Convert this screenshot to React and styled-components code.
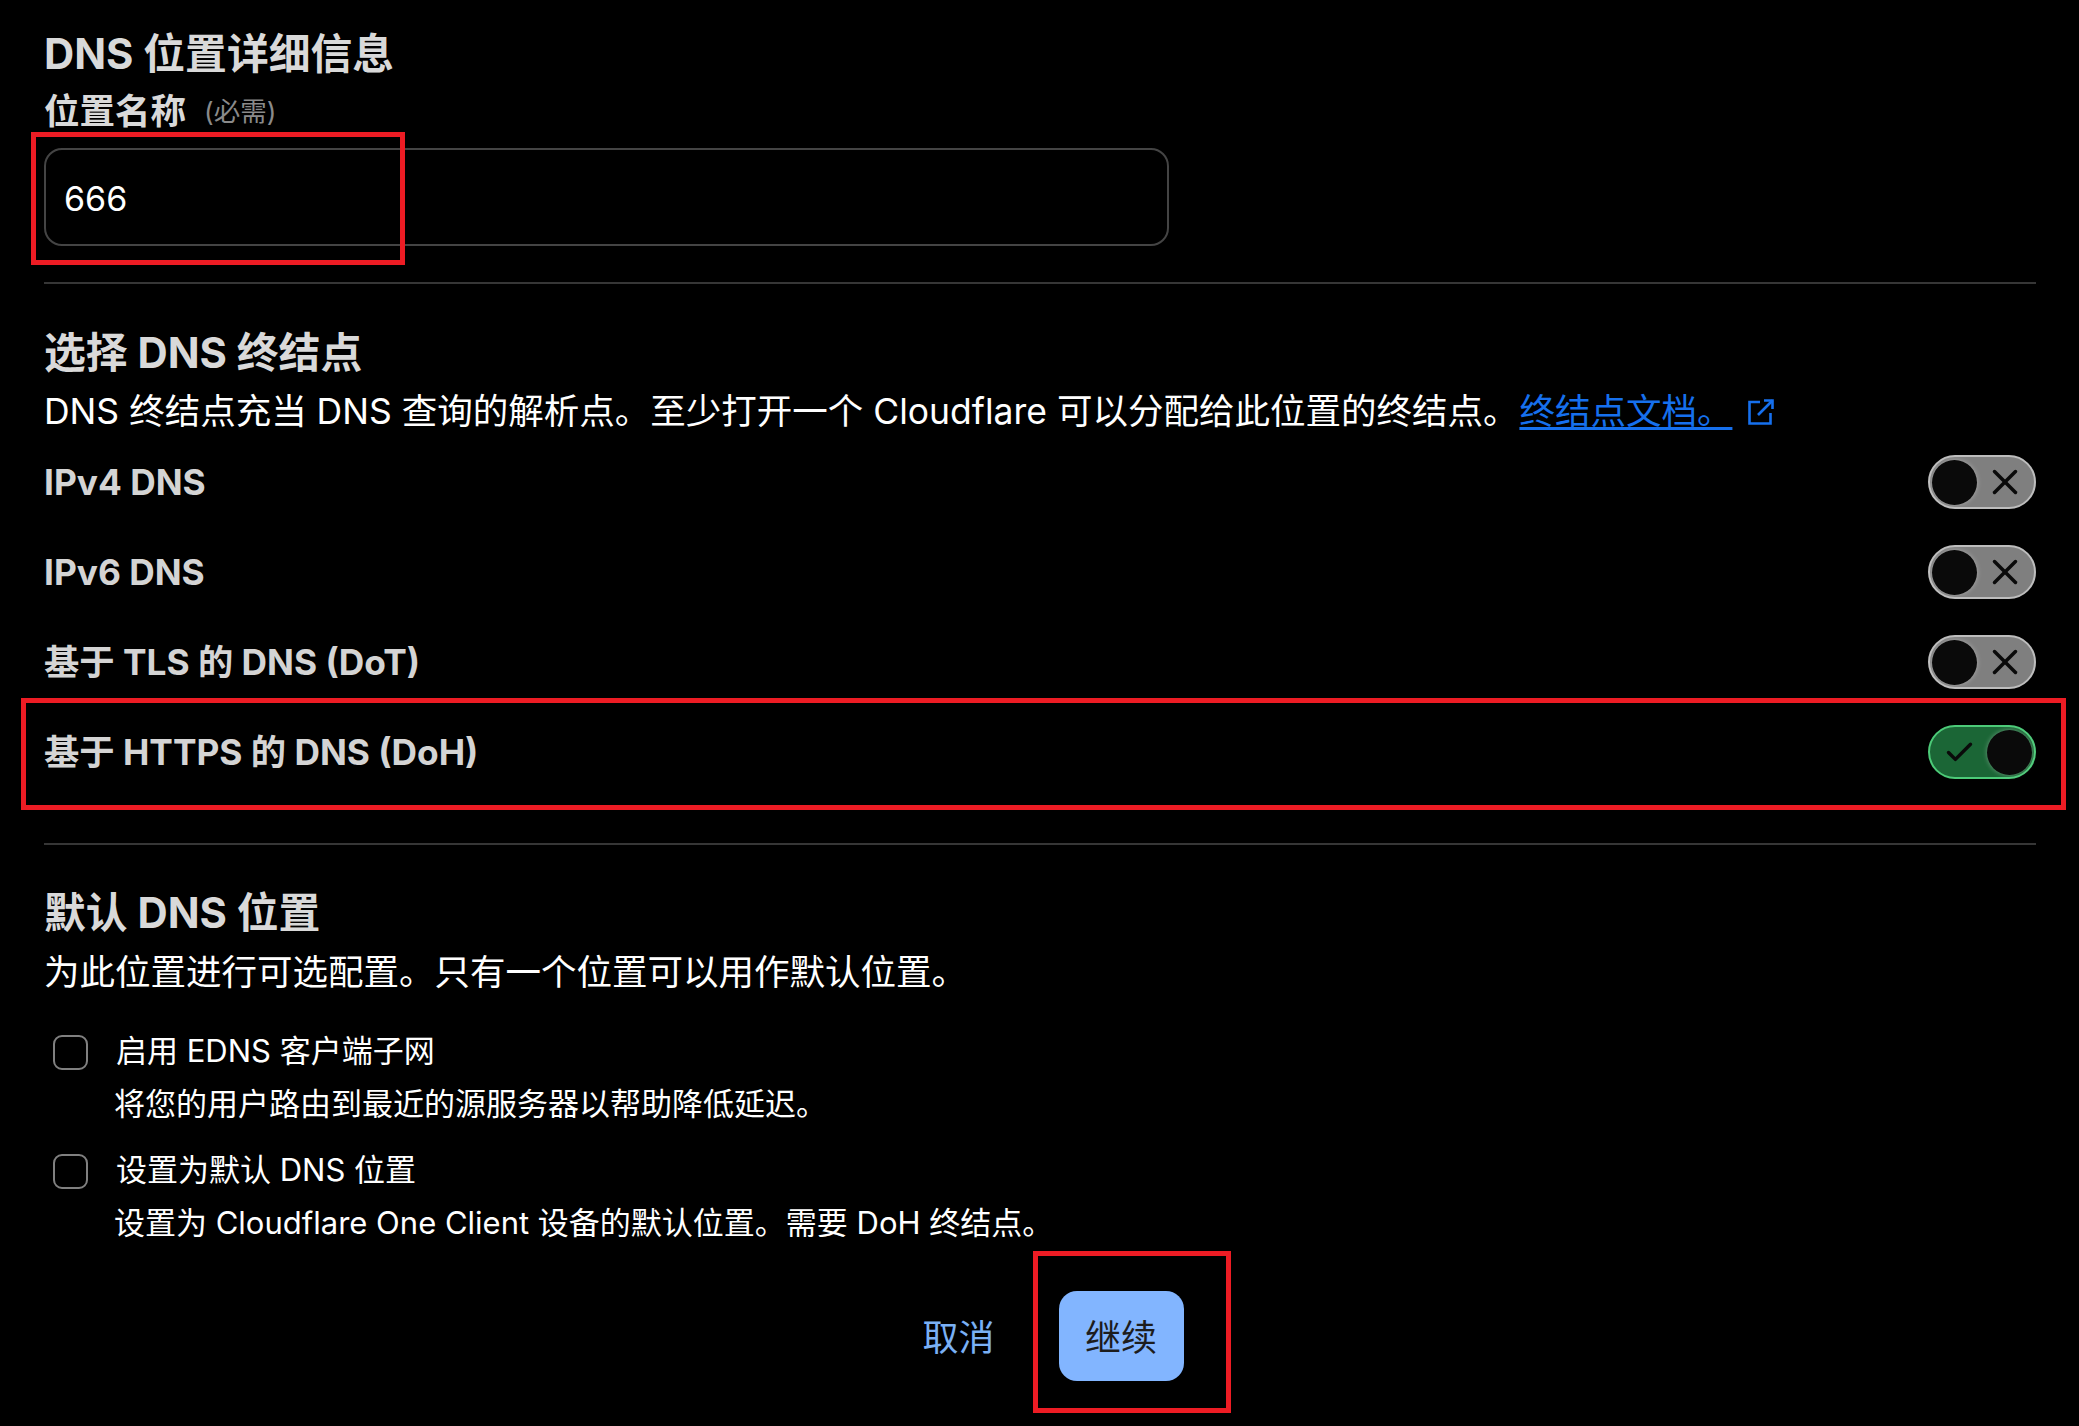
import React from 'react';
import styled, { createGlobalStyle } from 'styled-components';
import { Check, X } from 'lucide-react';

const GlobalStyle = createGlobalStyle`
  html, body {
    margin: 0;
    background: #000;
  }
  body {
    font-family: Inter, 'Noto Sans CJK SC', sans-serif;
    color: #fff;
  }
`;

const Page = styled.div`
  box-sizing: border-box;
  width: 2079px;
  min-height: 1426px;
  padding: 29px 43px 0 44px;
  background: #000;
`;

const SectionTitle = styled.h2`
  margin: 0;
  font-size: 41.8px;
  line-height: 50px;
  font-weight: 700;
  color: #d9d9d9;
`;

const FieldLabel = styled.div`
  display: flex;
  align-items: center;
  gap: 18px;
  margin-top: 11px;
  font-size: 35.5px;
  line-height: 44px;
  font-weight: 700;
  color: #d9d9d9;
`;

const Hint = styled.span`
  margin-top: -2px;
  font-size: 26.5px;
  font-weight: 400;
  color: #8a8a8a;
`;

const Highlight = styled.div`
  position: relative;
  ${({ $width }) => $width && `width: ${$width}px;`}
  ${({ $top }) => $top && `margin-top: ${$top}px;`}
`;

const RedBox = styled.span`
  position: absolute;
  box-sizing: border-box;
  top: ${({ $top }) => $top}px;
  bottom: ${({ $bottom }) => $bottom}px;
  left: ${({ $left }) => $left}px;
  ${({ $width }) => $width && `width: ${$width}px;`}
  ${({ $right }) => $right !== undefined && `right: ${$right}px;`}
  border: 5px solid #ed1c24;
  pointer-events: none;
`;

const NameInput = styled.input`
  display: block;
  box-sizing: border-box;
  width: 100%;
  height: 98px;
  padding: 2px 18px 0;
  background: transparent;
  border: 2.5px solid #444;
  border-radius: 18px;
  outline: none;
  font: 400 34px Inter, 'Noto Sans CJK SC', sans-serif;
  color: #fff;
`;

const Divider = styled.hr`
  height: 2px;
  margin: ${({ $top }) => $top}px 0 ${({ $bottom }) => $bottom}px;
  border: 0;
  background: #363636;
`;

const Description = styled.p`
  display: flex;
  align-items: center;
  margin: ${({ $top }) => $top}px 0 0;
  font-size: 35.5px;
  line-height: 44px;
  color: #fff;
`;

const DocLink = styled.a`
  margin-left: 1px;
  color: #1670ee;
  text-decoration: underline;
  text-decoration-thickness: 3px;
  text-underline-offset: 3px;
`;

const LinkIcon = styled.svg`
  width: 26px;
  height: 26px;
  margin-left: 16px;
  fill: none;
  stroke: #1670ee;
  stroke-width: 2.6;
`;

const Rows = styled.div`
  display: flex;
  flex-direction: column;
  gap: 36px;
  margin-top: 21px;
`;

const Row = styled.div`
  display: flex;
  align-items: center;
  justify-content: space-between;
  height: 54px;
  font-size: 35.3px;
  line-height: 54px;
  font-weight: 700;
  color: #d4d4d4;
`;

const RowLabel = styled.span`
  margin-top: 2px;
`;

const Toggle = styled.button`
  display: flex;
  flex-shrink: 0;
  align-items: center;
  justify-content: space-between;
  box-sizing: border-box;
  width: 108px;
  height: 54px;
  padding: 0 2px;
  background: ${({ $on }) => ($on ? '#1b6636' : '#7f7f7f')};
  border: 2.7px solid ${({ $on }) => ($on ? '#4ccb78' : '#bdbdbd')};
  border-radius: 27px;
  color: #0a0a0a;

  svg {
    flex-shrink: 0;
    margin: ${({ $on }) => ($on ? '0 0 0 11px' : '0 6px 0 0')};
  }
`;

const Knob = styled.span`
  flex-shrink: 0;
  width: 45px;
  height: 45px;
  border-radius: 50%;
  background: #0a0a0a;
  box-shadow: 0 0 5px rgba(255, 255, 255, 0.35);
`;

const Options = styled.div`
  display: flex;
  flex-direction: column;
  gap: 27px;
  margin-top: 37px;
`;

const Option = styled.label`
  display: flex;
  gap: 26px;
  padding-left: 9px;
`;

const CheckBox = styled.input`
  flex-shrink: 0;
  width: 35px;
  height: 35px;
  margin: 3px 0 0;
  appearance: none;
  background: transparent;
  border: 2.7px solid #808080;
  border-radius: 9px;
`;

const OptionText = styled.div`
  display: flex;
  flex-direction: column;
  gap: 13px;
  margin-top: -1px;
  font-size: 31px;
  line-height: 40px;
  color: #fff;
`;

const OptionTitle = styled.span`
  margin-left: 2px;
`;

const Actions = styled.div`
  display: flex;
  align-items: center;
  justify-content: center;
  gap: 64px;
  margin-top: 48px;
  padding-left: 26px;
`;

const CancelButton = styled.button`
  padding: 0 0 3px;
  background: none;
  border: 0;
  font: 400 36px Inter, 'Noto Sans CJK SC', sans-serif;
  color: #7ab0f5;
`;

const SubmitButton = styled.button`
  width: 125px;
  height: 90px;
  padding: 0 0 3px;
  background: #82b5ff;
  border: 0;
  border-radius: 18px;
  font: 400 36px Inter, 'Noto Sans CJK SC', sans-serif;
  color: #1d1d1d;
`;

const endpoints = [
  { label: 'IPv4 DNS', on: false },
  { label: 'IPv6 DNS', on: false },
  { label: '基于 TLS 的 DNS (DoT)', on: false },
  { label: '基于 HTTPS 的 DNS (DoH)', on: true },
];

const options = [
  { title: '启用 EDNS 客户端子网', text: '将您的用户路由到最近的源服务器以帮助降低延迟。' },
  { title: '设置为默认 DNS 位置', text: '设置为 Cloudflare One Client 设备的默认位置。需要 DoH 终结点。' },
];

const EndpointToggle = ({ on }) => (
  <Toggle $on={on}>
    {on ? (
      <>
        <Check size={33} strokeWidth={2.5} />
        <Knob />
      </>
    ) : (
      <>
        <Knob />
        <X size={42} strokeWidth={2} />
      </>
    )}
  </Toggle>
);

const EndpointRow = ({ label, on }) => (
  <Row>
    <RowLabel>{label}</RowLabel>
    <EndpointToggle on={on} />
  </Row>
);

const App = () => {
  return (
    <Page>
      <GlobalStyle />
      <SectionTitle>DNS 位置详细信息</SectionTitle>
      <FieldLabel>
        位置名称
        <Hint>(必需)</Hint>
      </FieldLabel>
      <Highlight $width={1125} $top={14}>
        <NameInput defaultValue="666" />
        <RedBox $top={-16} $bottom={-19} $left={-13} $width={374} />
      </Highlight>
      <Divider $top={36} $bottom={44} />

      <SectionTitle>选择 DNS 终结点</SectionTitle>
      <Description $top={12}>
        DNS 终结点充当 DNS 查询的解析点。至少打开一个 Cloudflare 可以分配给此位置的终结点。
        <DocLink href="#">终结点文档。</DocLink>
        <LinkIcon viewBox="0 0 26 26">
          <path d="M12 3H1.5V24.5H22.5V14" />
          <path d="M10 16L24.5 1.5" />
          <path d="M16 1.5H24.5V10" />
        </LinkIcon>
      </Description>
      <Rows>
        {endpoints.slice(0, 3).map((row) => (
          <EndpointRow key={row.label} label={row.label} on={row.on} />
        ))}
        <Highlight>
          <EndpointRow label={endpoints[3].label} on={endpoints[3].on} />
          <RedBox $top={-27} $bottom={-31} $left={-23} $right={-30} />
        </Highlight>
      </Rows>
      <Divider $top={64} $bottom={43} />

      <SectionTitle>默认 DNS 位置</SectionTitle>
      <Description $top={13}>为此位置进行可选配置。只有一个位置可以用作默认位置。</Description>
      <Options>
        {options.map((option) => (
          <Option key={option.title}>
            <CheckBox type="checkbox" />
            <OptionText>
              <OptionTitle>{option.title}</OptionTitle>
              <span>{option.text}</span>
            </OptionText>
          </Option>
        ))}
      </Options>
      <Actions>
        <CancelButton>取消</CancelButton>
        <Highlight>
          <SubmitButton>继续</SubmitButton>
          <RedBox $top={-40} $bottom={-32} $left={-26} $width={198} />
        </Highlight>
      </Actions>
    </Page>
  );
};

export default App;
